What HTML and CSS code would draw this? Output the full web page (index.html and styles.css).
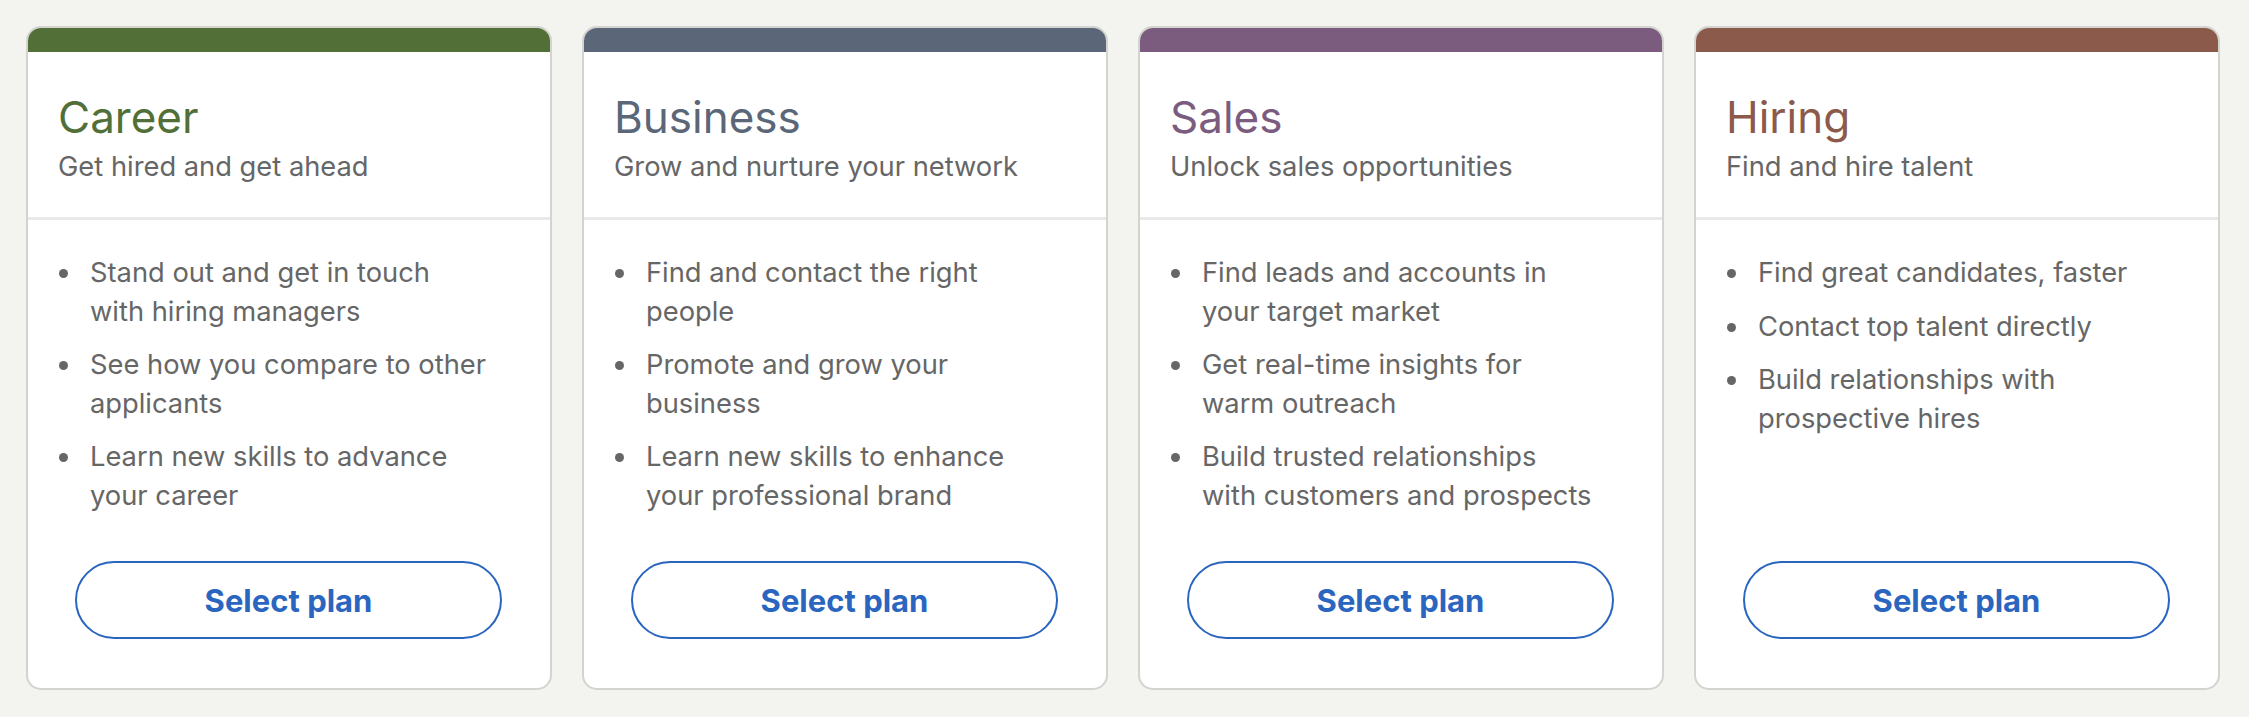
FILE: index.html
```html
<!DOCTYPE html>
<html lang="en">
<head>
<meta charset="utf-8">
<title>Plans</title>
<link rel="stylesheet" href="styles.css">
</head>
<body>
<main class="plans">
  <section class="card card-career">
    <div class="bar"></div>
    <header class="head">
      <h2 class="title">Career</h2>
      <p class="sub">Get hired and get ahead</p>
    </header>
    <div class="body">
      <ul class="list">
        <li><span>Stand out and get in touch<br>with hiring managers</span></li>
        <li><span>See how you compare to other<br>applicants</span></li>
        <li><span>Learn new skills to advance<br>your career</span></li>
      </ul>
      <button class="btn">Select plan</button>
    </div>
  </section>
  <section class="card card-business">
    <div class="bar"></div>
    <header class="head">
      <h2 class="title">Business</h2>
      <p class="sub">Grow and nurture your network</p>
    </header>
    <div class="body">
      <ul class="list">
        <li><span>Find and contact the right<br>people</span></li>
        <li><span>Promote and grow your<br>business</span></li>
        <li><span>Learn new skills to enhance<br>your professional brand</span></li>
      </ul>
      <button class="btn">Select plan</button>
    </div>
  </section>
  <section class="card card-sales">
    <div class="bar"></div>
    <header class="head">
      <h2 class="title">Sales</h2>
      <p class="sub">Unlock sales opportunities</p>
    </header>
    <div class="body">
      <ul class="list">
        <li><span>Find leads and accounts in<br>your target market</span></li>
        <li><span>Get real-time insights for<br>warm outreach</span></li>
        <li><span>Build trusted relationships<br>with customers and prospects</span></li>
      </ul>
      <button class="btn">Select plan</button>
    </div>
  </section>
  <section class="card card-hiring">
    <div class="bar"></div>
    <header class="head">
      <h2 class="title">Hiring</h2>
      <p class="sub">Find and hire talent</p>
    </header>
    <div class="body">
      <ul class="list">
        <li><span>Find great candidates, faster</span></li>
        <li><span>Contact top talent directly</span></li>
        <li><span>Build relationships with<br>prospective hires</span></li>
      </ul>
      <button class="btn">Select plan</button>
    </div>
  </section>
</main>
</body>
</html>
```

FILE: styles.css
```css
* { box-sizing: border-box; }

html, body {
  margin: 0;
  padding: 0;
  background: #f3f3ef;
}

body {
  font-family: Inter, "Noto Sans", "Liberation Sans", sans-serif;
  color: #666666;
}

.plans {
  display: grid;
  grid-template-columns: repeat(4, 526px);
  column-gap: 30px;
  padding: 26px 0 0 26px;
}

.card {
  display: flex;
  flex-direction: column;
  height: 664px;
  background: #ffffff;
  border: 2px solid #d3d3cf;
  border-radius: 15px;
  overflow: hidden;
}

.bar {
  height: 24px;
  flex: none;
  background: var(--accent);
}

.card-career { --accent: #526f38; }
.card-business { --accent: #5b6779; }
.card-sales { --accent: #7b5c7f; }
.card-hiring { --accent: #8b5a4b; }

.head {
  padding: 37px 30px 31px;
  border-bottom: 3px solid #e9e9e9;
}

.title {
  margin: 0 0 3px;
  font-size: 44px;
  line-height: 56px;
  font-weight: 400;
  color: var(--accent);
}

.sub {
  margin: 0;
  font-size: 27.3px;
  line-height: 38px;
  color: #666666;
}

.body {
  flex: 1;
  display: flex;
  flex-direction: column;
  padding: 34px 47px 49px 31px;
}

.list {
  list-style: none;
  margin: 0;
  padding: 0;
  display: flex;
  flex-direction: column;
  gap: 15px;
  font-size: 27.3px;
  line-height: 38.5px;
  color: #666666;
}

.list li {
  display: flex;
  align-items: flex-start;
  white-space: nowrap;
}

.list li::before {
  content: "";
  flex: none;
  width: 9px;
  height: 9px;
  border-radius: 50%;
  background: #666666;
  margin: 15px 22px 0 0;
}

.btn {
  margin: auto 0 0 16px;
  height: 78px;
  width: 427px;
  border: 2px solid #2a65bf;
  border-radius: 39px;
  background: #ffffff;
  color: #2a65bf;
  font-family: inherit;
  font-size: 31px;
  font-weight: 700;
  cursor: pointer;
}
```
